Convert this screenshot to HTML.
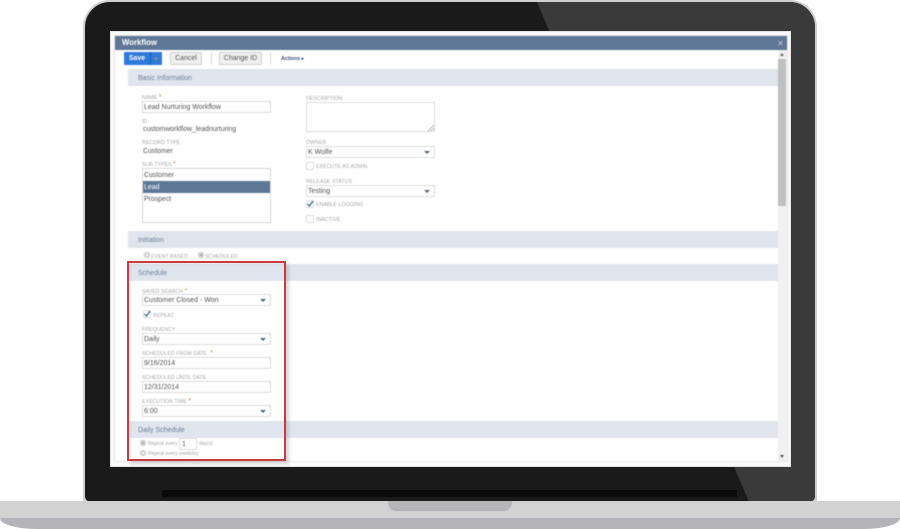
<!DOCTYPE html>
<html><head><meta charset="utf-8">
<style>
html,body{margin:0;padding:0;background:#fff}
#p{position:relative;width:900px;height:529px;overflow:hidden;background:#fff;font-family:"Liberation Sans",sans-serif}
#p div,#p span.a{position:absolute;box-sizing:border-box}
.t{white-space:nowrap;font-size:6.9px;color:#555;line-height:10px;margin-top:2px}
.l{white-space:nowrap;font-size:5.3px;color:#a8a8a8;line-height:8px;margin-top:1px}
.s{color:#d08a2a;font-size:7px}
.b{left:128px;width:650px;height:17px;background:#e0e5ed;color:#6a7f99;font-size:7px;line-height:19px;padding-left:10px}
.i{background:#fff;border:1px solid #dcdcdc;height:12px;font-size:7px;line-height:12px;color:#555;padding-left:1px;white-space:nowrap}
.i i{position:absolute;right:4px;top:4px;width:0;height:0;border-left:3px solid transparent;border-right:3px solid transparent;border-top:3px solid #4a6688}
.c{width:8px;height:8px;background:#fff;border:1px solid #dcdcdc;border-radius:1px}
.btn{background:#f0f0f0;border:1px solid #cfcfcf;border-radius:1px;height:13px;top:52px;color:#555;font-size:7px;line-height:12px;text-align:center}
.r{width:6px;height:6px;border-radius:50%;border:1px solid #bbb;background:#e8e8e8}
.r b{position:absolute;left:1px;top:1px;width:2px;height:2px;border-radius:50%;background:#888}
</style></head><body>
<div id="p">
<!-- laptop -->
<div style="left:83px;top:0;width:734px;height:510px;background:#cfcfcf;border-radius:27px 27px 8px 8px"></div>
<div style="left:85px;top:2px;width:730px;height:500px;background:#1a1a1a;border-radius:25px 25px 6px 6px;overflow:hidden">
<svg width="730" height="500" style="position:absolute;left:0;top:0"><polygon points="452,0 730,0 730,500 664,500" fill="#3a3a3a"/><rect x="77" y="488" width="575" height="7" fill="#0a0a0a"/></svg>
</div>
<div style="left:0;top:501px;width:900px;height:28px;background:#b4b4b8;border-radius:0 0 36px 36px/0 0 11px 11px;overflow:hidden"></div>
<div style="left:0;top:501px;width:900px;height:17px;background:#d2d2d2"></div>
<div style="left:388px;top:501px;width:124px;height:10px;background:#b6b6b9;border-radius:0 0 8px 8px"></div>
<!-- screen -->
<div style="left:110px;top:31px;width:681px;height:436px;background:#fafafa;border:1px solid #e4e4e4"></div>
<div style="filter:blur(.45px);left:0;top:0;width:900px;height:529px">
<div style="left:115px;top:36px;width:672px;height:425px;background:#fff;box-shadow:0 0 0 1px #e6e6e6"></div>
<div style="left:115px;top:36px;width:672px;height:14px;background:#5f7796;color:#fff;font-weight:bold;font-size:7.8px;line-height:14px;padding-left:7px">Workflow</div>
<div style="left:777px;top:40px;color:#c5cfdc;font-size:8px;line-height:8px">✕</div>
<!-- scrollbar -->
<div style="left:778px;top:50px;width:9px;height:411px;background:#f1f1f1"></div>
<div style="left:778px;top:59px;width:8px;height:147px;background:#c0c0c0"></div>
<div style="left:780px;top:53px;width:0;height:0;border-left:2.5px solid transparent;border-right:2.5px solid transparent;border-bottom:3px solid #666"></div>
<div style="left:780px;top:455px;width:0;height:0;border-left:2.5px solid transparent;border-right:2.5px solid transparent;border-top:3px solid #555"></div>
<!-- toolbar -->
<div style="left:124px;top:52px;width:38px;height:13px;background:#2f78dc;border-radius:1px"></div>
<div style="left:124px;top:52px;width:26px;height:13px;color:#fff;font-weight:bold;font-size:7px;line-height:14px;text-align:center">Save</div>
<div style="left:150px;top:52px;width:1px;height:13px;background:#1f5aa8"></div>
<div style="left:154px;top:58px;width:0;height:0;border-left:2px solid transparent;border-right:2px solid transparent;border-top:2px solid #c9a050"></div>
<div class="btn" style="left:170px;width:32px">Cancel</div>
<div style="left:211px;top:52px;width:1px;height:13px;background:#ddd"></div>
<div class="btn" style="left:219px;width:43px">Change ID</div>
<div style="left:270px;top:52px;width:1px;height:13px;background:#ddd"></div>
<div class="t" style="left:281px;top:54px;font-size:5.2px;font-weight:bold;color:#35527f;margin-top:0">Actions ▸</div>
<!-- sections -->
<div class="b" style="top:69px">Basic Information</div>
<div class="l" style="left:142px;top:93px">NAME <span class="s">*</span></div>
<div class="i" style="left:142px;top:101px;width:129px">Lead Nurturing Workflow</div>
<div class="l" style="left:142px;top:117px">ID</div>
<div class="t" style="left:143px;top:123px">customworkflow_leadnurturing</div>
<div class="l" style="left:142px;top:138px">RECORD TYPE</div>
<div class="t" style="left:143px;top:145px">Customer</div>
<div class="l" style="left:142px;top:160px">SUB TYPES <span class="s">*</span></div>
<div style="left:142px;top:168px;width:129px;height:55px;background:#fff;border:1px solid #d8d8d8"></div>
<div class="t" style="left:144px;top:169px">Customer</div>
<div style="left:143px;top:181px;width:127px;height:12px;background:#5f7796;color:#fff;font-size:7px;line-height:13px;padding-left:1px">Lead</div>
<div class="t" style="left:144px;top:193px">Prospect</div>
<div class="l" style="left:306px;top:94px">DESCRIPTION</div>
<div style="left:306px;top:102px;width:129px;height:30px;background:#fff;border:1px solid #dcdcdc"></div>
<svg style="position:absolute;left:428px;top:125px" width="6" height="6"><path d="M0 6L6 0M3 6L6 3" stroke="#999" stroke-width=".7"/></svg>
<div class="l" style="left:306px;top:138px">OWNER</div>
<div class="i" style="left:306px;top:146px;width:129px">K Wolfe<i></i></div>
<div class="c" style="left:306px;top:162px"></div>
<div class="l" style="left:316px;top:162px">EXECUTE AS ADMIN</div>
<div class="l" style="left:306px;top:177px">RELEASE STATUS</div>
<div class="i" style="left:306px;top:185px;width:129px">Testing<i></i></div>
<div class="c" style="left:306px;top:200px"></div>
<svg style="position:absolute;left:306px;top:199px" width="9" height="9"><path d="M1.5 5L3.5 7L7 2" stroke="#2f5a96" stroke-width="1.2" fill="none"/></svg>
<div class="l" style="left:316px;top:200px">ENABLE LOGGING</div>
<div class="c" style="left:306px;top:215px"></div>
<div class="l" style="left:316px;top:215px">INACTIVE</div>
<div class="b" style="top:231px">Initiation</div>
<div class="r" style="left:144px;top:252px"></div>
<div class="l" style="left:151px;top:252px">EVENT BASED</div>
<div class="r" style="left:198px;top:252px"><b></b></div>
<div class="l" style="left:205px;top:252px">SCHEDULED</div>
<div class="b" style="top:264px">Schedule</div>
<div class="l" style="left:142px;top:287px">SAVED SEARCH <span class="s">*</span></div>
<div class="i" style="left:142px;top:294px;width:129px">Customer Closed - Won<i></i></div>
<div class="c" style="left:143px;top:310px"></div>
<svg style="position:absolute;left:143px;top:309px" width="9" height="9"><path d="M1.5 5L3.5 7L7 2" stroke="#2f5a96" stroke-width="1.2" fill="none"/></svg>
<div class="l" style="left:153px;top:311px">REPEAT</div>
<div class="l" style="left:142px;top:325px">FREQUENCY</div>
<div class="i" style="left:142px;top:333px;width:129px">Daily<i></i></div>
<div class="l" style="left:142px;top:349px">SCHEDULED FROM DATE <span class="s">&nbsp;*</span></div>
<div class="i" style="left:142px;top:357px;width:129px">9/16/2014</div>
<div class="l" style="left:142px;top:373px">SCHEDULED UNTIL DATE</div>
<div class="i" style="left:142px;top:381px;width:129px">12/31/2014</div>
<div class="l" style="left:142px;top:397px">EXECUTION TIME <span class="s">*</span></div>
<div class="i" style="left:142px;top:405px;width:129px">6:00<i></i></div>
<div class="b" style="top:421px">Daily Schedule</div>
<div class="r" style="left:140px;top:440px"><b></b></div>
<div class="l" style="left:148px;top:439px;font-size:5px">Repeat every</div>
<div class="i" style="left:179px;top:438px;width:18px;padding-left:2px">1</div>
<div class="l" style="left:199px;top:439px;font-size:5px">day(s)</div>
<div class="r" style="left:140px;top:450px"></div>
<div class="l" style="left:148px;top:449px;font-size:5px">Repeat every weekday</div>
</div>
<!-- red highlight -->
<div style="left:127px;top:261px;width:159px;height:200px;box-shadow:3px 3px 3px rgba(130,130,130,.3),inset 3px 3px 3px rgba(130,130,130,.22)"></div>
<div style="left:127px;top:261px;width:159px;height:2px;background:#cb3a40"></div>
<div style="left:127px;top:459px;width:159px;height:2px;background:#cb3a40"></div>
<div style="left:127px;top:261px;width:2px;height:200px;background:#cb3a40"></div>
<div style="left:284px;top:261px;width:2px;height:200px;background:#cb3a40"></div>
</div>
</body></html>
